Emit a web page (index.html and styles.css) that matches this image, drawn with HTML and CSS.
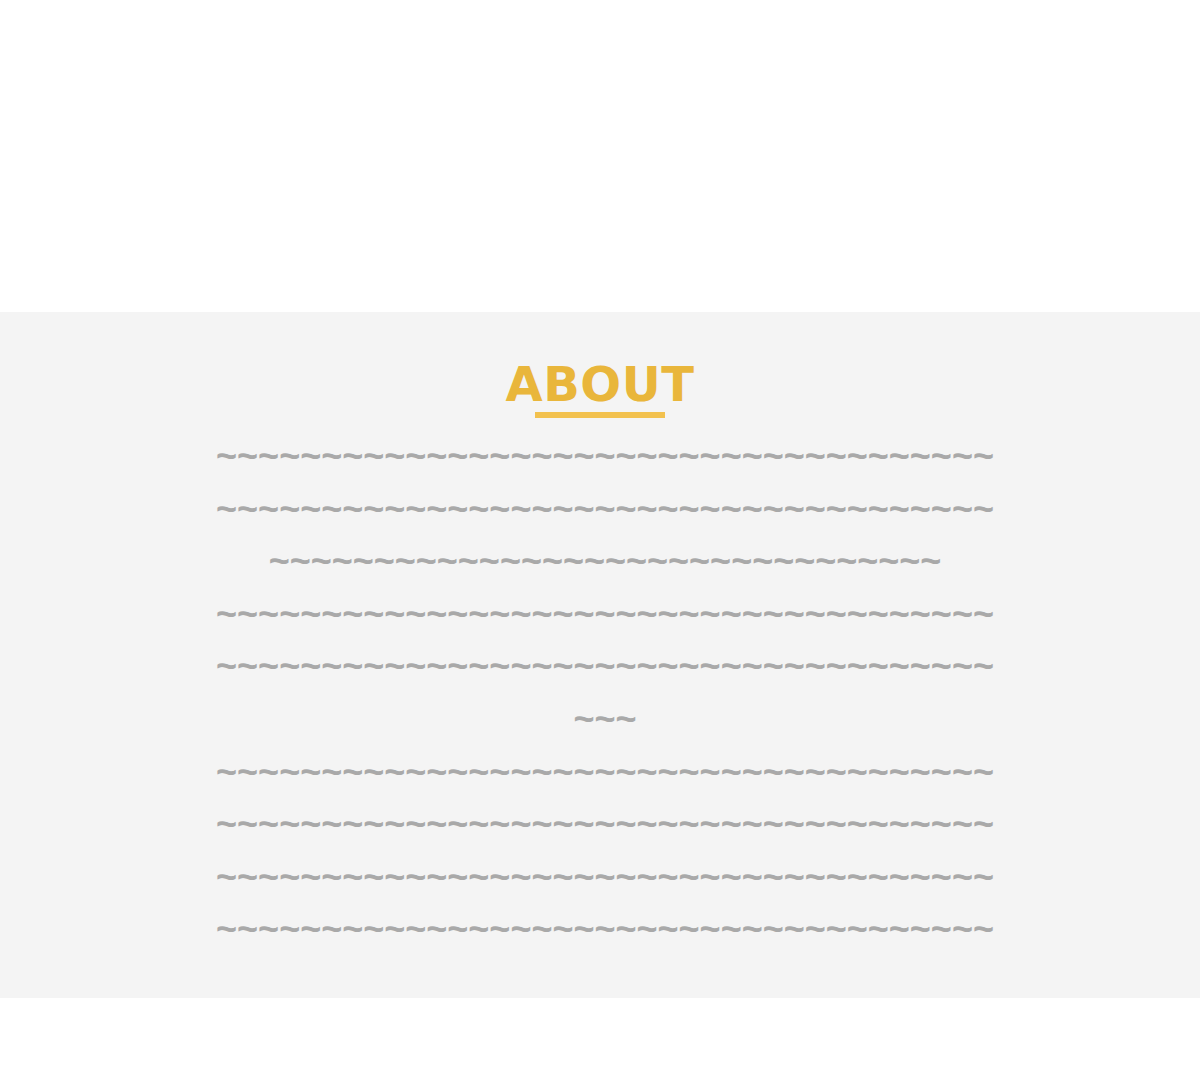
FILE: index.html
```html
<!DOCTYPE html>
<html>
<head>
<meta charset="utf-8">
<link rel="stylesheet" href="styles.css">
</head>
<body>
<div class="hero"></div>
<section class="about">
  <h2 class="about-title">ABOUT</h2>
  <div class="about-bar"></div>
  <div class="about-text">
    <p>~~~~~~~~~~~~~~~~~~~~~~~~~~~~~~~~~~~~~<br>~~~~~~~~~~~~~~~~~~~~~~~~~~~~~~~~~~~~~<br>~~~~~~~~~~~~~~~~~~~~~~~~~~~~~~~~</p>
    <p>~~~~~~~~~~~~~~~~~~~~~~~~~~~~~~~~~~~~~<br>~~~~~~~~~~~~~~~~~~~~~~~~~~~~~~~~~~~~~<br>~~~</p>
    <p>~~~~~~~~~~~~~~~~~~~~~~~~~~~~~~~~~~~~~<br>~~~~~~~~~~~~~~~~~~~~~~~~~~~~~~~~~~~~~<br>~~~~~~~~~~~~~~~~~~~~~~~~~~~~~~~~~~~~~<br>~~~~~~~~~~~~~~~~~~~~~~~~~~~~~~~~~~~~~</p>
  </div>
</section>
</body>
</html>
```
FILE: styles.css
```css
html, body {
  margin: 0;
  padding: 0;
  background: #ffffff;
  font-family: "DejaVu Sans", sans-serif;
}
.hero {
  height: 312px;
}
.about {
  background: #f4f4f4;
  padding: 44px 0 42px;
  display: flex;
  flex-direction: column;
  align-items: center;
}
.about-title {
  margin: 0;
  font-size: 48px;
  line-height: 56px;
  font-weight: bold;
  color: #e9b63b;
  letter-spacing: 0.5px;
}
.about-bar {
  width: 130px;
  height: 6px;
  background: #f2c14e;
  margin-bottom: 12px;
}
.about-text {
  width: 820px;
  padding-left: 10px;
  text-align: center;
}
.about-text p {
  margin: 0;
  font-family: "Liberation Sans", Arial, sans-serif;
  font-size: 36px;
  line-height: 52.6px;
  font-weight: bold;
  color: #a9a9a9;
  white-space: nowrap;
}
```
